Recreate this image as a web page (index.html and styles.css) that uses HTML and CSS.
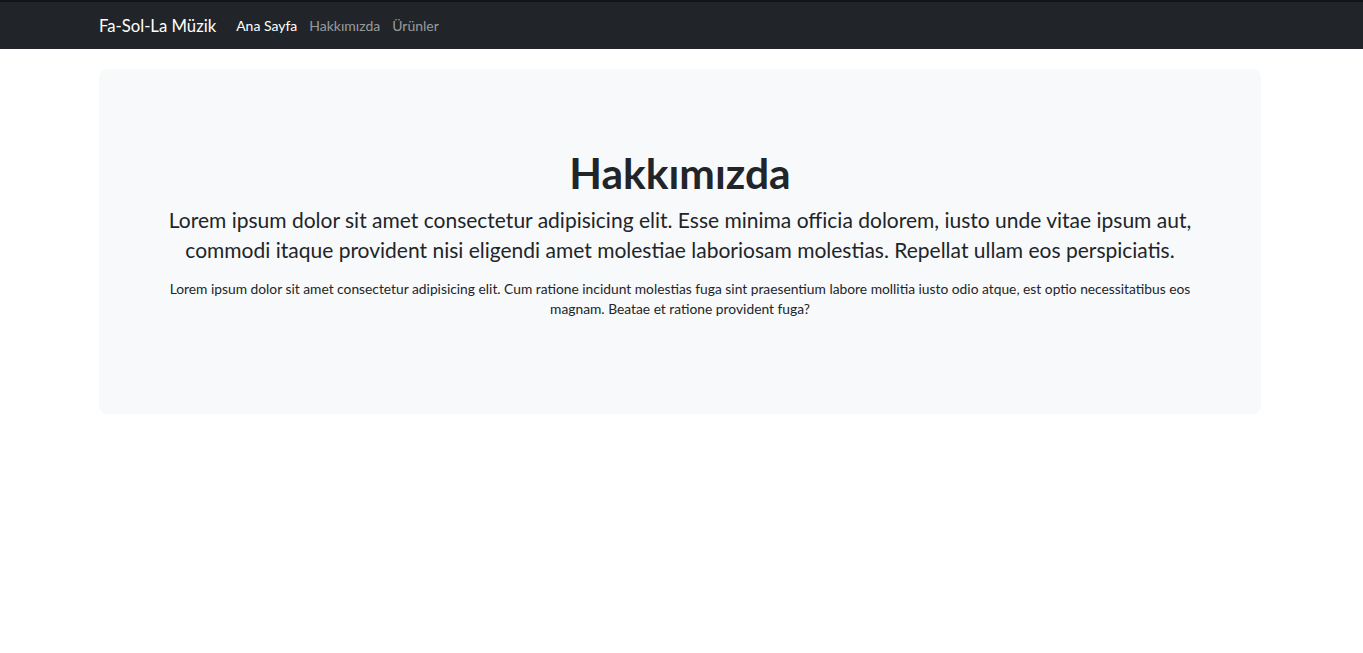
FILE: index.html
```html
<!DOCTYPE html>
<html lang="tr">
<head>
<meta charset="utf-8">
<title>Fa-Sol-La Müzik</title>
<link rel="stylesheet" href="styles.css">
</head>
<body>
<div class="topline"></div>
<nav class="navbar">
  <div class="container nav-inner">
    <a class="brand" href="#">Fa-Sol-La Müzik</a>
    <ul class="nav-links">
      <li><a class="nav-link active" href="#">Ana Sayfa</a></li>
      <li><a class="nav-link" href="#">Hakkımızda</a></li>
      <li><a class="nav-link" href="#">Ürünler</a></li>
    </ul>
  </div>
</nav>
<main class="container">
  <section class="jumbo">
    <h1 class="title">Hakkımızda</h1>
    <p class="lead">Lorem ipsum dolor sit amet consectetur adipisicing elit. Esse minima officia dolorem, iusto unde vitae ipsum aut, commodi itaque provident nisi eligendi amet molestiae laboriosam molestias. Repellat ullam eos perspiciatis.</p>
    <p class="small">Lorem ipsum dolor sit amet consectetur adipisicing elit. Cum ratione incidunt molestias fuga sint praesentium labore mollitia iusto odio atque, est optio necessitatibus eos magnam. Beatae et ratione provident fuga?</p>
  </section>
</main>
</body>
</html>
```
FILE: styles.css
```css
* { box-sizing: border-box; }
html, body { margin: 0; padding: 0; }
body {
  font-family: "Lato", "Noto Sans", sans-serif;
  color: #212529;
  background: #fff;
}
.topline { height: 2px; background: #131416; }
.navbar { background: #212529; height: 47px; }
.container { width: 1162px; margin-left: calc(50% - 582.5px); }
.nav-inner { display: flex; align-items: center; height: 100%; }
.brand {
  color: #fff;
  text-decoration: none;
  font-size: 16.7px;
  margin-right: 14px;
}
.nav-links { display: flex; list-style: none; margin: 0; padding: 0; }
.nav-link {
  display: block;
  padding: 0 6px;
  font-size: 14px;
  color: rgba(255,255,255,.55);
  text-decoration: none;
}
.nav-link.active { color: #fff; }
main.container { padding-top: 20px; }
.jumbo {
  background: #f8f9fa;
  border-radius: 8px;
  padding: 80px 64px 95px;
  text-align: center;
}
.title {
  margin: 0 0 8px;
  font-size: 42.5px;
  line-height: 48px;
  font-weight: 700;
}
.lead {
  margin: 0 0 14px;
  font-size: 21px;
  line-height: 30px;
}
.small {
  margin: 0;
  font-size: 13.8px;
  line-height: 20px;
}
```
